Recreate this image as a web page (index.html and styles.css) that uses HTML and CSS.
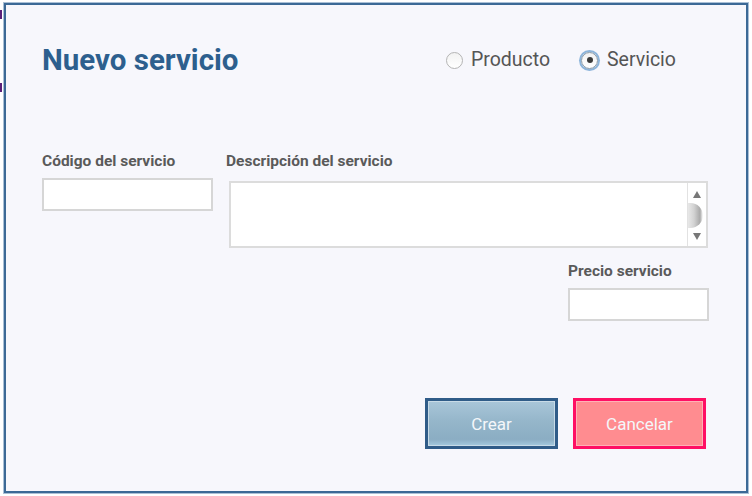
FILE: index.html
```html
<!DOCTYPE html>
<html lang="es">
<head>
<meta charset="utf-8">
<title>Nuevo servicio</title>
<link rel="stylesheet" href="styles.css">
</head>
<body>
<div class="page">
  <div class="edge">
    <span class="edge-mark edge-mark-top"></span>
    <span class="edge-mark edge-mark-mid"></span>
  </div>
  <div class="dialog">
    <div class="header">
      <h1 class="title">Nuevo servicio</h1>
      <div class="radios">
        <label class="radio"><span class="radio-dot"></span><span>Producto</span></label>
        <label class="radio radio-checked"><span class="radio-dot"></span><span>Servicio</span></label>
      </div>
    </div>
    <div class="form">
      <div class="col col-code">
        <div class="label">Código del servicio</div>
        <div class="input input-code"></div>
      </div>
      <div class="col col-desc">
        <div class="label">Descripción del servicio</div>
        <div class="textarea">
          <div class="textarea-body"></div>
          <div class="scrollbar">
            <span class="arrow arrow-up"></span>
            <span class="thumb"></span>
            <span class="arrow arrow-down"></span>
          </div>
        </div>
        <div class="price">
          <div class="label">Precio servicio</div>
          <div class="input input-price"></div>
        </div>
      </div>
    </div>
    <div class="footer">
      <button class="btn btn-create">Crear</button>
      <button class="btn btn-cancel">Cancelar</button>
    </div>
  </div>
</div>
</body>
</html>
```
FILE: styles.css
```css
html, body {
  margin: 0;
  padding: 0;
  background: #ffffff;
}
body {
  font-family: Roboto, "Liberation Sans", sans-serif;
  width: 752px;
  height: 496px;
  overflow: hidden;
}
.page {
  display: flex;
  align-items: flex-start;
  padding-top: 3px;
}
.edge {
  width: 4px;
  height: 100px;
  display: flex;
  flex-direction: column;
  margin-top: -3px;
}
.edge-mark {
  display: block;
  width: 2px;
  height: 9px;
  background: #5a1f78;
}
.edge-mark-top { margin-top: 10px; }
.edge-mark-mid { margin-top: 64px; }
.dialog {
  border: 2px solid #3c6996;
  box-shadow: 0 0 0 1px #aac0d6;
  background: #f7f7fc;
  padding: 0 37px 0 36px;
  box-sizing: border-box;
  width: 744px;
  height: 490px;
  display: flex;
  flex-direction: column;
}
.header {
  display: flex;
  justify-content: space-between;
  align-items: flex-start;
  padding-top: 37px;
  padding-right: 33px;
}
.title {
  margin: 0;
  font-size: 29.5px;
  line-height: 36px;
  font-weight: 700;
  color: #2d5f8e;
}
.radios {
  display: flex;
  gap: 31px;
  margin-top: 6px;
}
.radio {
  display: flex;
  align-items: center;
  gap: 8px;
  font-size: 19.5px;
  line-height: 24px;
  color: #555555;
}
.radio-dot {
  width: 15px;
  height: 15px;
  border-radius: 50%;
  border: 1px solid #b4b4b4;
  background: linear-gradient(#f2f2f2, #ffffff);
  display: flex;
  align-items: center;
  justify-content: center;
}
.radio-checked .radio-dot {
  border-color: #8a9aa8;
  box-shadow: 0 0 0 2px #8cb4da;
}
.radio-checked .radio-dot::after {
  content: "";
  width: 6px;
  height: 6px;
  border-radius: 50%;
  background: #3a3a3a;
}
.radio-checked { gap: 9px; }
.form {
  display: flex;
  gap: 13px;
  margin-top: 74px;
}
.label {
  font-size: 15.5px;
  line-height: 18px;
  font-weight: 700;
  color: #5a5a5a;
  margin-bottom: 8px;
  white-space: nowrap;
}
.col-code { width: 171px; }
.col-desc {
  width: 483px;
  display: flex;
  flex-direction: column;
}
.input {
  background: #ffffff;
  border: 2px solid #d6d6d6;
  box-sizing: border-box;
  height: 33px;
}
.textarea {
  margin: 3px 0 0 3px;
  width: 479px;
  height: 67px;
  background: #ffffff;
  border: 2px solid #dcdcdc;
  box-sizing: border-box;
  display: flex;
}
.textarea-body { flex: 1; }
.scrollbar {
  width: 18px;
  border-left: 1px solid #e2e2e2;
  display: flex;
  flex-direction: column;
  align-items: center;
  justify-content: space-between;
  padding: 8px 0 6px;
}
.arrow {
  width: 0;
  height: 0;
  border-left: 4px solid transparent;
  border-right: 4px solid transparent;
}
.arrow-up { border-bottom: 7px solid #777777; }
.arrow-down { border-top: 7px solid #777777; }
.thumb {
  align-self: flex-start;
  width: 15px;
  height: 25px;
  border-radius: 0 13px 13px 0;
  background: linear-gradient(90deg, #e8e8e8 0%, #d2d2d2 40%, #a9a9a9 80%, #ffffff 100%);
}
.price {
  align-self: flex-end;
  width: 141px;
  margin-top: 14px;
}
.input-price { width: 141px; }
.footer {
  display: flex;
  justify-content: flex-end;
  gap: 15px;
  margin-top: 77px;
  margin-right: 3px;
}
.btn {
  width: 133px;
  height: 51px;
  box-sizing: border-box;
  border: 3px solid;
  font-family: Roboto, "Liberation Sans", sans-serif;
  font-size: 17px;
  color: #f4f7fa;
  padding: 0;
}
.btn-create {
  border-color: #305c88;
  background: linear-gradient(#a9c6d9 0%, #95b6ca 45%, #8badc3 85%, #a6cbe0 100%);
  box-shadow: inset 0 0 0 1px #c8dbe7;
}
.btn-cancel {
  border-color: #ff0f64;
  background: #ff8c90;
  box-shadow: inset 0 0 0 1px #ffb1b5;
}
```
